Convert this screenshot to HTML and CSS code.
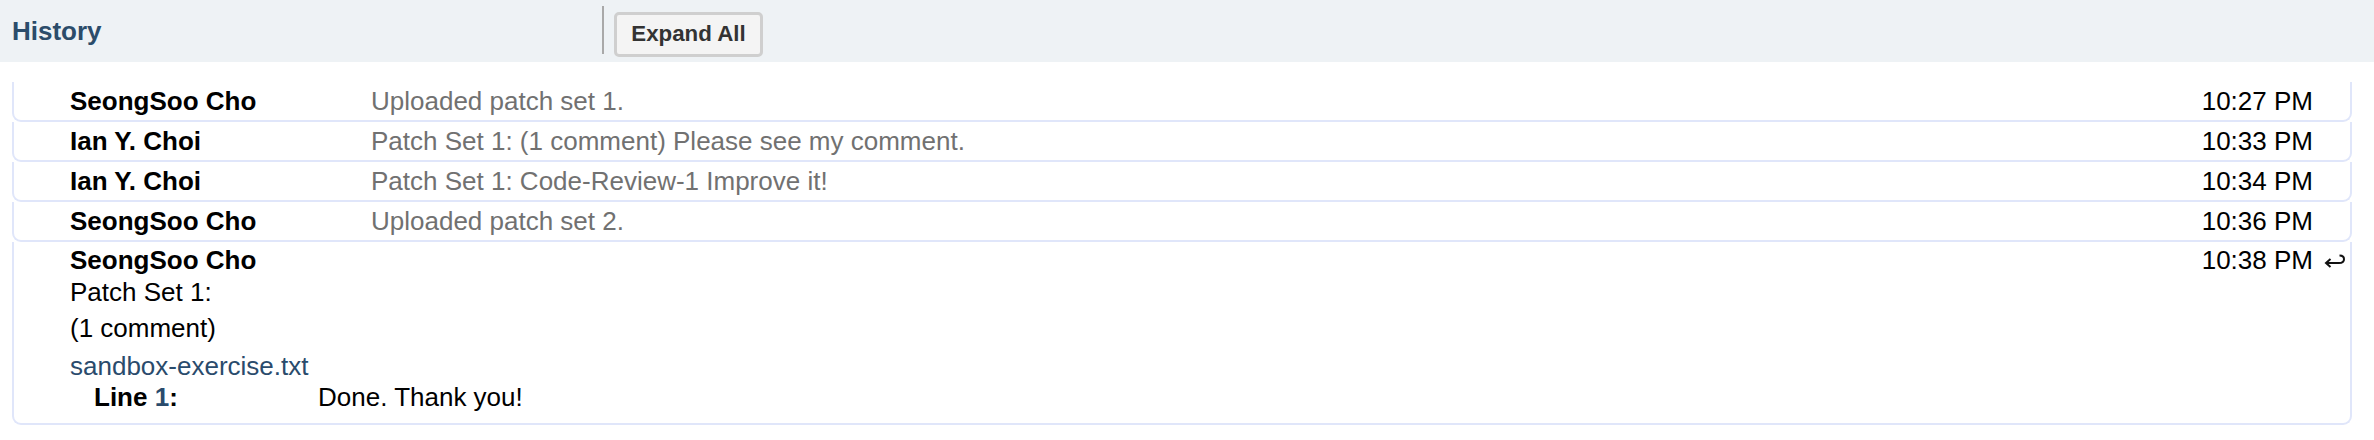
FILE: index.html
```html
<!DOCTYPE html>
<html>
<head>
<meta charset="utf-8">
<link rel="stylesheet" href="styles.css">
</head>
<body>
<div class="header">
  <div class="title">History</div>
  <div class="sep"></div>
  <button class="btn">Expand All</button>
</div>
<div class="messages">
  <div class="msg">
    <div class="name">SeongSoo Cho</div>
    <div class="summary">Uploaded patch set 1.</div>
    <div class="time">10:27 PM</div>
    <div class="reply"></div>
  </div>
  <div class="msg">
    <div class="name">Ian Y. Choi</div>
    <div class="summary">Patch Set 1: (1 comment) Please see my comment.</div>
    <div class="time">10:33 PM</div>
    <div class="reply"></div>
  </div>
  <div class="msg">
    <div class="name">Ian Y. Choi</div>
    <div class="summary">Patch Set 1: Code-Review-1 Improve it!</div>
    <div class="time">10:34 PM</div>
    <div class="reply"></div>
  </div>
  <div class="msg">
    <div class="name">SeongSoo Cho</div>
    <div class="summary">Uploaded patch set 2.</div>
    <div class="time">10:36 PM</div>
    <div class="reply"></div>
  </div>
  <div class="msg expanded">
    <div class="head">
      <div class="name">SeongSoo Cho</div>
      <div class="time">10:38 PM</div>
      <div class="reply">
        <svg width="24" height="18" viewBox="0 0 24 18"><path d="M3 12 H16 C19 12 21 10.5 21 8.2 C21 6 19 4.6 16.5 4.6" fill="none" stroke="#111" stroke-width="2"/><path d="M7.5 8 L3 12 L7.5 16" fill="none" stroke="#111" stroke-width="2"/></svg>
      </div>
    </div>
    <div class="body">
      <p class="line">Patch Set 1:</p>
      <p class="line p2">(1 comment)</p>
      <a class="file">sandbox-exercise.txt</a>
      <div class="comment">
        <span class="lineno">Line <a class="num">1</a>:</span>
        <span class="ctext">Done. Thank you!</span>
      </div>
    </div>
  </div>
</div>
</body>
</html>
```
FILE: styles.css
```css
html, body {
  margin: 0;
  padding: 0;
  background: #ffffff;
  font-family: "Liberation Sans", Arial, sans-serif;
  font-size: 26px;
  color: #000;
}
.header {
  height: 62px;
  background: #eef2f5;
  display: flex;
  align-items: center;
}
.title {
  padding-left: 12px;
  box-sizing: border-box;
  width: 602px;
  font-weight: bold;
  color: #2b4c6a;
  font-size: 26px;
}
.sep {
  width: 2px;
  height: 48px;
  background: #a9a9a9;
  align-self: flex-start;
  margin-top: 6px;
}
.btn {
  margin-left: 10px;
  width: 149px;
  height: 45px;
  margin-top: 6px;
  border: 3px solid #cfcfcf;
  border-radius: 5px;
  background: #f4f4f4;
  font-family: "Liberation Sans", Arial, sans-serif;
  font-weight: bold;
  font-size: 22.3px;
  color: #333;
  padding: 0;
}
.messages {
  margin: 20px 22px 0 12px;
}
.msg {
  height: 40px;
  box-sizing: border-box;
  border: 2px solid #e0e6fa;
  border-top: none;
  border-radius: 0 0 9px 9px;
  display: flex;
  align-items: center;
  padding-left: 56px;
}
.name {
  width: 301px;
  font-weight: bold;
  flex: none;
}
.summary {
  flex: 1;
  color: #717171;
  white-space: nowrap;
}
.time {
  flex: none;
}
.reply {
  width: 37px;
  flex: none;
  display: flex;
  justify-content: flex-end;
  align-items: center;
}
.reply svg {
  display: block;
  margin-right: 3px;
}
.msg.expanded {
  height: 183px;
  display: block;
  padding-top: 2px;
}
.head {
  display: flex;
  align-items: center;
  height: 32px;
}
.head .name {
  flex: 1;
}
.body {
  line-height: 32px;
}
.line {
  margin: 0;
}
.p2 {
  margin-top: 4px;
}
.file {
  display: block;
  margin-top: 6px;
  color: #2a4b6c;
}
.comment {
  display: flex;
  line-height: 30px;
  padding-left: 24px;
}
.lineno {
  width: 224px;
  font-weight: bold;
  flex: none;
}
.num {
  color: #2a4b6c;
}
```
